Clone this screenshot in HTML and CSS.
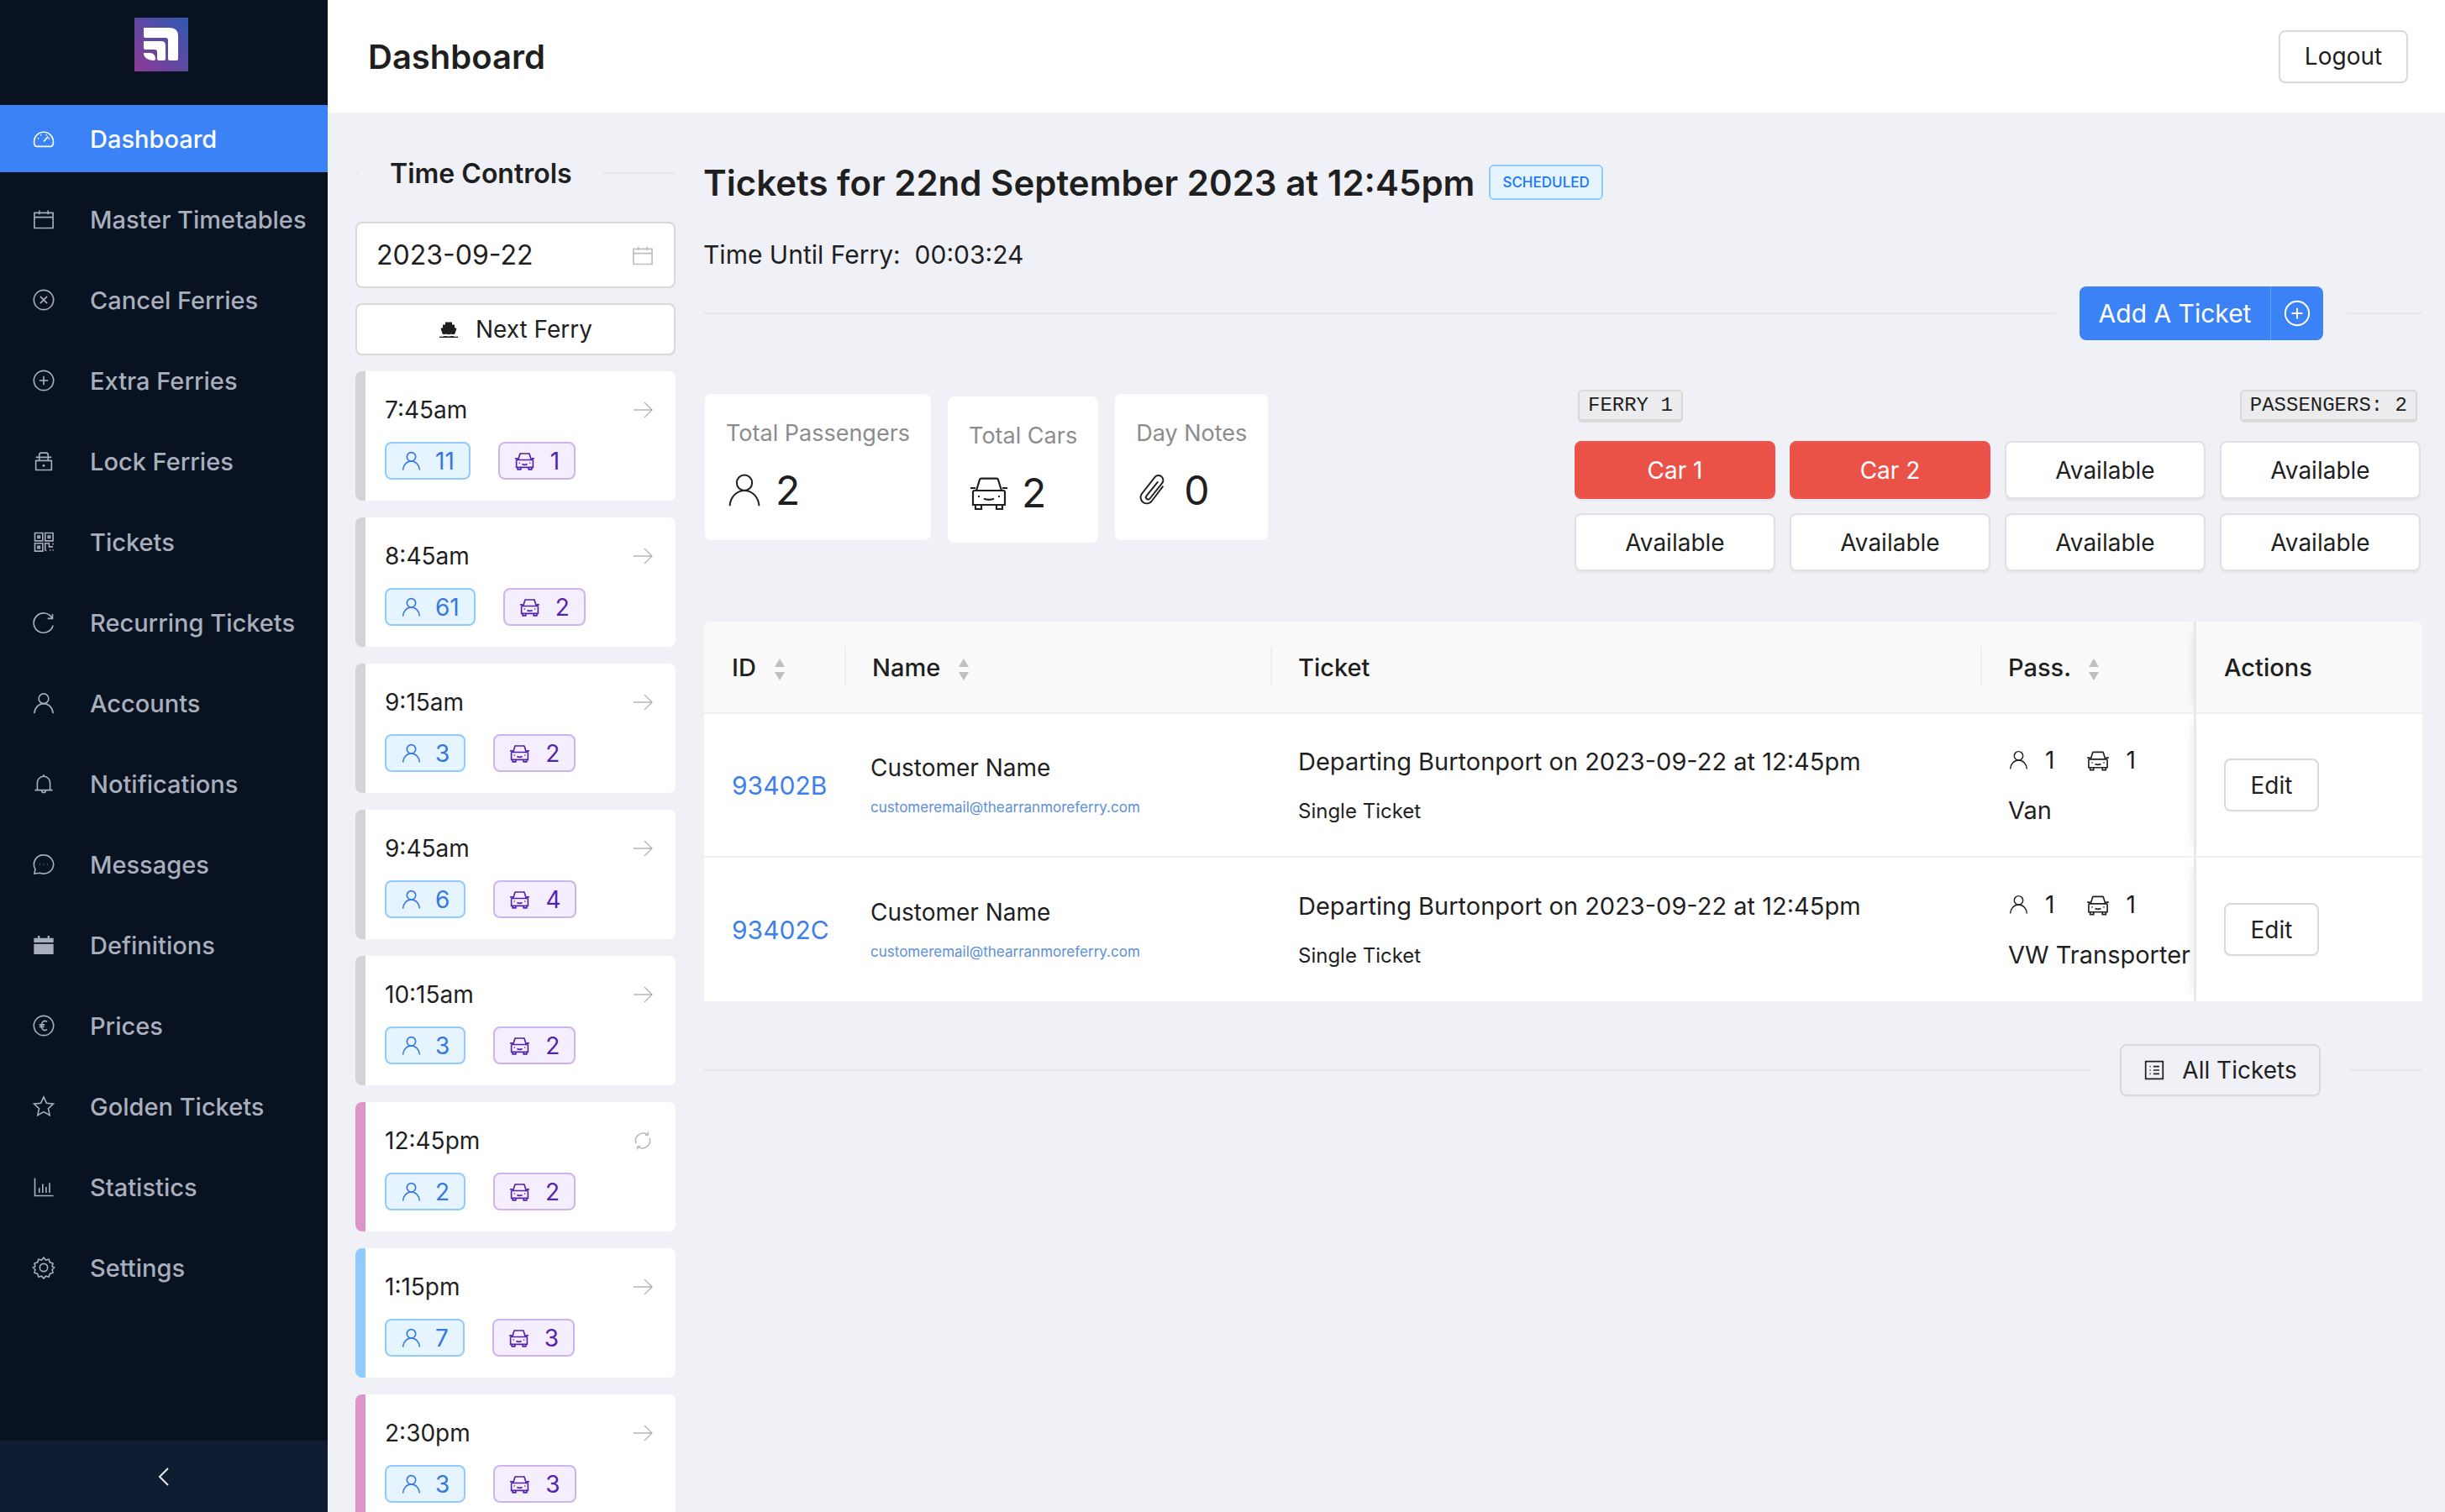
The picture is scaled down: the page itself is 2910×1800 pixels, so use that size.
FILE: index.html
```html
<!DOCTYPE html>
<html lang="en">
<head>
  <meta charset="UTF-8" />
  <title>Dashboard</title>
  <link rel="stylesheet" href="styles.css">
</head>
<body>
  <svg class="sprites" aria-hidden="true">
    <symbol id="i-gauge" viewBox="0 0 24 24"><path d="M5 20h14c1.700 0 2.800-2 2.800-4.800A9.800 9.800 0 0 0 2.200 15.200C2.200 18 3.300 20 5 20z"/><path d="M12 15l4.500-5M6 11.500l1 .7M9 7.800l.4 1M15 7.800l-.4 1M18 11.500l-1 .7"/></symbol>
    <symbol id="i-calendar" viewBox="0 0 24 24"><path d="M2.500 5.500h19v15.500h-19zM2.500 10h19M7.500 3v4M16.500 3v4"/></symbol>
    <symbol id="i-x-circle" viewBox="0 0 24 24"><circle cx="12" cy="12" r="10"/><path d="M8.500 8.500l7 7M15.500 8.500l-7 7"/></symbol>
    <symbol id="i-plus-circle" viewBox="0 0 24 24"><circle cx="12" cy="12" r="10"/><path d="M12 7.500v9M7.500 12h9"/></symbol>
    <symbol id="i-lock" viewBox="0 0 24 24"><path d="M4 11.500h16v9.500H4zM7.500 11.500V5.500a2 2 0 0 1 2-2h5a2 2 0 0 1 2 2v6M4 8h16"/><circle cx="12" cy="16.500" r=".6"/></symbol>
    <symbol id="i-qr" viewBox="0 0 24 24"><path d="M3 3h8v8H3zM13.500 3h8v8h-8zM3 13.500h8v8H3zM6 6h2v2H6zM16.500 6h2v2h-2zM6 16.500h2v2H6zM13.500 21v-7.500h4v3.500h4M21.500 13.500v1.500M14 21h1M18 20.500h1M21 20.500h1"/></symbol>
    <symbol id="i-refresh" viewBox="0 0 24 24"><path d="M20.500 7.500A10 10 0 1 0 21.500 15M21 3.500v4.500h-5"/></symbol>
    <symbol id="i-user" viewBox="0 0 24 24"><circle cx="12" cy="7.500" r="5"/><path d="M2.500 22.500c.3-5.700 4.500-10 9.500-10s9.200 4.300 9.500 10"/></symbol>
    <symbol id="i-bell" viewBox="0 0 24 24"><path d="M5.500 18.500V11a6.500 6.500 0 0 1 13 0v7.500M3 18.500h18M12 2.500v2M10 19a2 2 0 0 0 4 0"/></symbol>
    <symbol id="i-chat" viewBox="0 0 24 24"><path d="M12 2.500a10 9.500 0 1 1-3.800 18.300L2.500 21.500l.9-4.700A9.500 9.500 0 0 1 12 2.500z"/><path d="M8 12h.5M11.800 12h.5M15.500 12h.5"/></symbol>
    <symbol id="i-euro" viewBox="0 0 24 24"><circle cx="12" cy="12" r="10"/><path d="M15.500 8c-3-1.800-5.800-.2-5.800 4s2.800 5.800 5.800 4M7.500 11h5.500M7.500 13.200h5"/></symbol>
    <symbol id="i-star" viewBox="0 0 24 24"><path d="M12 2.500l2.900 6.300 6.900.8-5.100 4.700 1.400 6.800-6.100-3.400-6.100 3.400 1.400-6.800-5.100-4.700 6.900-.8z"/></symbol>
    <symbol id="i-bars" viewBox="0 0 24 24"><path d="M3 3v18h19M7.500 18v-5M11 18V9M14.500 18v-6M18 18V8"/></symbol>
    <symbol id="i-gear" viewBox="0 0 24 24"><path d="M12 1.800l2.100 2.500 3.200-.7 1 3.100 3.100 1-.7 3.200 2 1.100-2 2.100.7 3.200-3.100 1-1 3.100-3.200-.7-2.100 2.500-2.100-2.500-3.200.7-1-3.100-3.100-1 .7-3.200-2-2.100 2-1.100-.7-3.200 3.100-1 1-3.100 3.200.7z"/><circle cx="12" cy="12" r="4"/></symbol>
    <symbol id="i-car" viewBox="0 0 24 24"><path d="M3.500 11h17a1 1 0 0 1 1 1v7.500h-19V12a1 1 0 0 1 1-1zM4.500 11l2-6.500a1 1 0 0 1 1-.7h9a1 1 0 0 1 1 .7l2 6.500M1 9.500h3M20 9.500h3M4 19.500v2.500h3.500v-2.500M16.500 19.500v2.500H20v-2.500M9 15.800c1.500 .8 4.500 .8 6 0M5.500 14.500h1M17.500 14.500h1"/></symbol>
    <symbol id="i-arrow" viewBox="0 0 24 24"><path d="M1 12h22M14 3l9 9-9 9"/></symbol>
    <symbol id="i-sync" viewBox="0 0 24 24"><path d="M4 15A9 9 0 0 1 18 5M20 9a9 9 0 0 1-14 10M15 5.500l3.500-.5-.3-3.500M9 18.500l-3.500.5.3 3.500"/></symbol>
    <symbol id="i-clip" viewBox="0 0 24 24"><path d="M18.500 9.500l-8 10.500a4.200 4.200 0 0 1-6.700-5L12.800 3.500a3.200 3.200 0 0 1 5 4L9.500 18a1.500 1.500 0 0 1-2.400-1.800L15 6.500"/></symbol>
    <symbol id="i-list" viewBox="0 0 24 24"><path d="M2.500 2.500h19v19h-19zM11 8h6.500M11 12h6.500M11 16h6.500M7 8h1M7 12h1M7 16h1"/></symbol>
    <symbol id="i-sort" viewBox="0 0 12 26"><path d="M6 0l6 10H0zM6 26L0 16h12z"/></symbol>
    <symbol id="i-calendar-fill" viewBox="0 0 24 24"><path d="M6 2.500h2v2.500h8V2.500h2V5h4v4.500H2V5h4zM2 11h20v10.500H2z"/></symbol>
    <symbol id="i-ship" viewBox="0 0 24 24"><path d="M8 3.500h8v3h3v3.500l2.500 1-2.200 6.500c-2 1-3.300.5-4.300 0-1.800 1-4.200 1-6 0-1 .5-2.300 1-4.300 0L2.500 11 5 10V6.500h3zM1 20.500c4 1 5-1 7-.5s6 .5 8 0 3 1.500 7 .5v1.500H1z"/></symbol>
  </svg>

  <aside class="sidebar">
    <div class="logo-area">
      <svg class="logo" viewBox="0 0 64 64">
        <defs>
          <linearGradient id="logo-grad" x1="0" y1="1" x2="1" y2="0">
            <stop offset="0" stop-color="#8e3a94"/>
            <stop offset="1" stop-color="#2e58b0"/>
          </linearGradient>
        </defs>
        <rect width="64" height="64" fill="url(#logo-grad)"/>
        <path fill="#fff" d="M11 12H42Q52 12 52 22V49Q52 51 50 51H42Q40 51 40 49V27Q40 24 37 24H13Q11 24 11 22Z"/>
        <path fill="#fff" d="M11 28H32Q37 28 37 33V49Q37 51 35 51H29Q27 51 27 49V41Q27 38 24 38H13Q11 38 11 36Z"/>
        <path fill="#fff" d="M11 42H19Q25 43 25 49Q25 51 22 51Q13 50 11 44Z"/>
      </svg>
    </div>
    <nav class="nav">
      <a class="nav-item active"><svg class="icon"><use href="#i-gauge"/></svg>Dashboard</a>
      <a class="nav-item"><svg class="icon"><use href="#i-calendar"/></svg>Master Timetables</a>
      <a class="nav-item"><svg class="icon"><use href="#i-x-circle"/></svg>Cancel Ferries</a>
      <a class="nav-item"><svg class="icon"><use href="#i-plus-circle"/></svg>Extra Ferries</a>
      <a class="nav-item"><svg class="icon"><use href="#i-lock"/></svg>Lock Ferries</a>
      <a class="nav-item"><svg class="icon"><use href="#i-qr"/></svg>Tickets</a>
      <a class="nav-item"><svg class="icon"><use href="#i-refresh"/></svg>Recurring Tickets</a>
      <a class="nav-item"><svg class="icon"><use href="#i-user"/></svg>Accounts</a>
      <a class="nav-item"><svg class="icon"><use href="#i-bell"/></svg>Notifications</a>
      <a class="nav-item"><svg class="icon"><use href="#i-chat"/></svg>Messages</a>
      <a class="nav-item"><svg class="icon solid"><use href="#i-calendar-fill"/></svg>Definitions</a>
      <a class="nav-item"><svg class="icon"><use href="#i-euro"/></svg>Prices</a>
      <a class="nav-item"><svg class="icon"><use href="#i-star"/></svg>Golden Tickets</a>
      <a class="nav-item"><svg class="icon"><use href="#i-bars"/></svg>Statistics</a>
      <a class="nav-item"><svg class="icon"><use href="#i-gear"/></svg>Settings</a>
    </nav>
    <div class="collapse">
      <svg class="collapse-icon" viewBox="0 0 16 24"><path d="M13 2L3 12l10 10"/></svg>
    </div>
  </aside>

  <div class="main">
    <header class="topbar">
      <h1>Dashboard</h1>
      <button class="btn logout">Logout</button>
    </header>

    <div class="content">
      <section class="times">
        <div class="times-title">
          <span class="rule short"></span>
          <h2>Time Controls</h2>
          <span class="rule"></span>
        </div>
        <div class="date-input">
          <span>2023-09-22</span>
          <svg class="icon"><use href="#i-calendar"/></svg>
        </div>
        <button class="btn next-ferry"><svg class="icon solid"><use href="#i-ship"/></svg>Next Ferry</button>

        <div class="ferry-card grey">
          <div class="ferry-top"><span>7:45am</span><svg class="icon"><use href="#i-arrow"/></svg></div>
          <div class="ferry-tags">
            <span class="tag pax"><svg class="icon"><use href="#i-user"/></svg>11</span>
            <span class="tag car"><svg class="icon"><use href="#i-car"/></svg>1</span>
          </div>
        </div>
        <div class="ferry-card grey">
          <div class="ferry-top"><span>8:45am</span><svg class="icon"><use href="#i-arrow"/></svg></div>
          <div class="ferry-tags">
            <span class="tag pax"><svg class="icon"><use href="#i-user"/></svg>61</span>
            <span class="tag car"><svg class="icon"><use href="#i-car"/></svg>2</span>
          </div>
        </div>
        <div class="ferry-card grey">
          <div class="ferry-top"><span>9:15am</span><svg class="icon"><use href="#i-arrow"/></svg></div>
          <div class="ferry-tags">
            <span class="tag pax"><svg class="icon"><use href="#i-user"/></svg>3</span>
            <span class="tag car"><svg class="icon"><use href="#i-car"/></svg>2</span>
          </div>
        </div>
        <div class="ferry-card grey">
          <div class="ferry-top"><span>9:45am</span><svg class="icon"><use href="#i-arrow"/></svg></div>
          <div class="ferry-tags">
            <span class="tag pax"><svg class="icon"><use href="#i-user"/></svg>6</span>
            <span class="tag car"><svg class="icon"><use href="#i-car"/></svg>4</span>
          </div>
        </div>
        <div class="ferry-card grey">
          <div class="ferry-top"><span>10:15am</span><svg class="icon"><use href="#i-arrow"/></svg></div>
          <div class="ferry-tags">
            <span class="tag pax"><svg class="icon"><use href="#i-user"/></svg>3</span>
            <span class="tag car"><svg class="icon"><use href="#i-car"/></svg>2</span>
          </div>
        </div>
        <div class="ferry-card pink">
          <div class="ferry-top"><span>12:45pm</span><svg class="icon"><use href="#i-sync"/></svg></div>
          <div class="ferry-tags">
            <span class="tag pax"><svg class="icon"><use href="#i-user"/></svg>2</span>
            <span class="tag car"><svg class="icon"><use href="#i-car"/></svg>2</span>
          </div>
        </div>
        <div class="ferry-card blue">
          <div class="ferry-top"><span>1:15pm</span><svg class="icon"><use href="#i-arrow"/></svg></div>
          <div class="ferry-tags">
            <span class="tag pax"><svg class="icon"><use href="#i-user"/></svg>7</span>
            <span class="tag car"><svg class="icon"><use href="#i-car"/></svg>3</span>
          </div>
        </div>
        <div class="ferry-card pink">
          <div class="ferry-top"><span>2:30pm</span><svg class="icon"><use href="#i-arrow"/></svg></div>
          <div class="ferry-tags">
            <span class="tag pax"><svg class="icon"><use href="#i-user"/></svg>3</span>
            <span class="tag car"><svg class="icon"><use href="#i-car"/></svg>3</span>
          </div>
        </div>
      </section>

      <section class="tickets">
        <div class="tickets-title">
          <h2>Tickets for 22nd September 2023 at 12:45pm</h2>
          <span class="status">SCHEDULED</span>
        </div>
        <div class="countdown">Time Until Ferry:&nbsp; 00:03:24</div>

        <div class="rule-row add-row">
          <span class="rule"></span>
          <div class="add-btn">
            <span class="add-label">Add A Ticket</span>
            <span class="add-plus"><svg class="icon"><use href="#i-plus-circle"/></svg></span>
          </div>
          <span class="rule end"></span>
        </div>

        <div class="summary">
          <div class="stats">
            <div class="stat">
              <div class="stat-label">Total Passengers</div>
              <div class="stat-value"><svg class="icon stat-user"><use href="#i-user"/></svg>2</div>
            </div>
            <div class="stat offset">
              <div class="stat-label">Total Cars</div>
              <div class="stat-value"><svg class="icon stat-car"><use href="#i-car"/></svg>2</div>
            </div>
            <div class="stat">
              <div class="stat-label">Day Notes</div>
              <div class="stat-value"><svg class="icon stat-clip"><use href="#i-clip"/></svg>0</div>
            </div>
          </div>

          <div class="deck">
            <div class="deck-head">
              <span class="kbd">FERRY 1</span>
              <span class="kbd">PASSENGERS: 2</span>
            </div>
            <div class="deck-grid">
              <button class="seat taken">Car 1</button>
              <button class="seat taken">Car 2</button>
              <button class="seat">Available</button>
              <button class="seat">Available</button>
              <button class="seat">Available</button>
              <button class="seat">Available</button>
              <button class="seat">Available</button>
              <button class="seat">Available</button>
            </div>
          </div>
        </div>

        <table class="ticket-table">
          <colgroup>
            <col class="col-id"><col class="col-name"><col class="col-ticket"><col class="col-pass"><col class="col-actions">
          </colgroup>
          <thead>
            <tr>
              <th>ID <svg class="sort"><use href="#i-sort"/></svg></th>
              <th class="sep">Name <svg class="sort"><use href="#i-sort"/></svg></th>
              <th class="sep">Ticket</th>
              <th class="sep">Pass. <svg class="sort"><use href="#i-sort"/></svg></th>
              <th class="actions">Actions</th>
            </tr>
          </thead>
          <tbody>
            <tr>
              <td><a class="ticket-id">93402B</a></td>
              <td>
                <div class="customer">Customer Name</div>
                <a class="email">customeremail@thearranmoreferry.com</a>
              </td>
              <td>
                <div class="departing">Departing Burtonport on 2023-09-22 at 12:45pm</div>
                <div class="ticket-type">Single Ticket</div>
              </td>
              <td>
                <div class="counts">
                  <svg class="icon"><use href="#i-user"/></svg><span>1</span>
                  <svg class="icon car-small"><use href="#i-car"/></svg><span>1</span>
                </div>
                <div class="vehicle">Van</div>
              </td>
              <td class="actions"><button class="btn edit">Edit</button></td>
            </tr>
            <tr>
              <td><a class="ticket-id">93402C</a></td>
              <td>
                <div class="customer">Customer Name</div>
                <a class="email">customeremail@thearranmoreferry.com</a>
              </td>
              <td>
                <div class="departing">Departing Burtonport on 2023-09-22 at 12:45pm</div>
                <div class="ticket-type">Single Ticket</div>
              </td>
              <td>
                <div class="counts">
                  <svg class="icon"><use href="#i-user"/></svg><span>1</span>
                  <svg class="icon car-small"><use href="#i-car"/></svg><span>1</span>
                </div>
                <div class="vehicle">VW Transporter</div>
              </td>
              <td class="actions"><button class="btn edit">Edit</button></td>
            </tr>
          </tbody>
        </table>

        <div class="rule-row all-row">
          <span class="rule"></span>
          <button class="btn all-tickets"><svg class="icon"><use href="#i-list"/></svg>All Tickets</button>
          <span class="rule end"></span>
        </div>
      </section>
    </div>
  </div>
</body>
</html>
```

FILE: styles.css
```css
* {
  box-sizing: border-box;
}
body {
  display: flex;
  height: 100vh;
  margin: 0;
  overflow: hidden;
  background: #f0f1f7;
  color: #1f1f1f;
  font-family: Inter, "Liberation Sans", sans-serif;
  font-size: 30px;
}
h1, h2 {
  margin: 0;
  font-weight: 600;
}
.sprites {
  display: none;
}
.icon {
  flex: none;
  width: 28px;
  height: 28px;
  fill: none;
  stroke: currentColor;
  stroke-width: 1.4;
}
.icon.solid {
  fill: currentColor;
  stroke: none;
}

/* sidebar */
.sidebar {
  display: flex;
  flex: none;
  flex-direction: column;
  width: 390px;
  background: #081220;
}
.logo-area {
  display: flex;
  justify-content: center;
  height: 125px;
  padding: 21px 7px 0 0;
}
.logo {
  width: 64px;
  height: 64px;
}
.nav {
  display: flex;
  flex: 1;
  flex-direction: column;
  gap: 16px;
}
.nav-item {
  display: flex;
  align-items: center;
  gap: 41px;
  height: 80px;
  padding-left: 38px;
  color: #a8afbc;
  font-size: 29px;
  font-weight: 500;
}
.nav-item.active {
  background: #3b82f6;
  color: #fff;
}
.collapse {
  display: flex;
  align-items: center;
  justify-content: center;
  height: 85px;
  background: #0f1d33;
}
.collapse-icon {
  width: 16px;
  height: 24px;
  fill: none;
  stroke: #e5e7eb;
  stroke-width: 2;
}

/* top bar */
.main {
  display: flex;
  flex: 1;
  flex-direction: column;
  min-width: 0;
}
.topbar {
  display: flex;
  flex: none;
  align-items: center;
  justify-content: space-between;
  height: 134px;
  padding: 0 44px 0 48px;
  background: #fff;
}
.topbar h1 {
  font-size: 40px;
}
.btn {
  border: 2px solid #d9d9d9;
  border-radius: 8px;
  background: #fff;
  color: #1f1f1f;
  font-family: inherit;
  font-size: 28px;
  box-shadow: 0 2px 0 rgba(0,0,0,0.02);
}
.logout {
  width: 154px;
  height: 63px;
}

.content {
  display: flex;
  flex: 1;
  gap: 33px;
  min-height: 0;
  padding: 52px 27px 0 33px;
  overflow: hidden;
}
.rule {
  flex: 1;
  height: 2px;
  background: #e6e6ec;
}

/* time column */
.times {
  flex: none;
  width: 381px;
}
.times-title {
  display: flex;
  align-items: center;
  height: 40px;
  margin-bottom: 38px;
}
.times-title h2 {
  padding: 0 36px 0 37px;
  font-size: 32px;
}
.rule.short {
  flex: none;
  width: 4px;
}
.date-input {
  display: flex;
  align-items: center;
  justify-content: space-between;
  height: 79px;
  margin-bottom: 18px;
  padding: 0 23px;
  border: 2px solid #d9d9d9;
  border-radius: 8px;
  background: #fff;
  font-size: 32px;
}
.date-input .icon {
  color: #bdbdbd;
}
.next-ferry {
  display: flex;
  align-items: center;
  justify-content: center;
  gap: 20px;
  width: 100%;
  height: 62px;
  margin-bottom: 19px;
}
.next-ferry .icon {
  width: 24px;
  height: 24px;
}
.ferry-card {
  height: 154px;
  margin-bottom: 20px;
  padding: 28px 27px 0 23px;
  border-left: 12px solid #d4d4d6;
  border-radius: 8px;
  background: #fff;
}
.ferry-card.pink {
  border-left-color: #dd94c9;
}
.ferry-card.blue {
  border-left-color: #91caff;
}
.ferry-top {
  display: flex;
  align-items: center;
  justify-content: space-between;
  height: 36px;
  margin-bottom: 20px;
  font-size: 28px;
}
.ferry-top .icon {
  width: 24px;
  height: 24px;
  color: #b5b5b5;
}
.ferry-tags {
  display: flex;
  gap: 33px;
}
.tag {
  display: flex;
  align-items: center;
  height: 45px;
  padding: 0 17px;
  border: 2px solid;
  border-radius: 8px;
  font-size: 28px;
}
.tag.pax {
  gap: 16px;
  border-color: #91caff;
  background: #e6f4ff;
  color: #3478e0;
}
.tag.car {
  gap: 18px;
  border-color: #cdb4ef;
  background: #f5eefe;
  color: #5223ad;
}
.tag .icon {
  width: 25px;
  height: 25px;
  stroke-width: 1.6;
}

/* tickets column */
.tickets {
  flex: 1;
  min-width: 0;
}
.tickets-title {
  display: flex;
  align-items: center;
  gap: 17px;
  height: 62px;
}
.tickets-title h2 {
  font-size: 42px;
}
.status {
  padding: 9px 14px;
  border: 2px solid #91caff;
  border-radius: 6px;
  background: #e6f4ff;
  color: #1677ff;
  font-size: 17px;
  font-weight: 500;
}
.countdown {
  display: flex;
  align-items: center;
  height: 40px;
  margin-top: 35px;
}
.rule-row {
  display: flex;
  align-items: center;
}
.add-row {
  gap: 28px;
  height: 64px;
  margin-top: 18px;
}
.rule.end {
  flex: none;
  width: 90px;
}
.add-btn {
  display: flex;
  width: 290px;
  height: 64px;
  border-radius: 8px;
  background: #3b82f6;
  color: #fff;
}
.add-label {
  display: flex;
  flex: 1;
  align-items: center;
  justify-content: center;
}
.add-plus {
  display: flex;
  flex: none;
  align-items: center;
  justify-content: center;
  width: 63px;
  border-left: 1px solid #6ba2f8;
}
.add-plus .icon {
  width: 34px;
  height: 34px;
}

.summary {
  display: flex;
  justify-content: space-between;
  height: 216px;
  margin-top: 59px;
}
.stats {
  display: flex;
  align-items: flex-start;
  gap: 20px;
  padding: 5px 0 0 2px;
}
.stat {
  height: 174px;
  padding: 29px 25px 0;
  border-radius: 8px;
  background: #fff;
}
.stat.offset {
  margin-top: 3px;
}
.stat-label {
  color: #8c8c8c;
  font-size: 27px;
  line-height: 36px;
}
.stat-value {
  display: flex;
  align-items: center;
  gap: 15px;
  height: 44px;
  margin-top: 27px;
  font-size: 48px;
}
.stat-value .icon {
  stroke-width: 1.1;
}
.stat-user {
  width: 44px;
  height: 44px;
}
.stat-car {
  width: 48px;
  height: 48px;
}
.stat-clip {
  width: 42px;
  height: 44px;
}
.deck {
  width: 1007px;
  margin-right: 2px;
}
.deck-head {
  display: flex;
  justify-content: space-between;
  height: 39px;
  margin-bottom: 22px;
  padding: 0 4px;
}
.kbd {
  display: flex;
  align-items: center;
  padding: 0 10px;
  border: 2px solid #d9d9d9;
  border-bottom-width: 4px;
  border-radius: 5px;
  background: #ececee;
  font-family: "Liberation Mono", monospace;
  font-size: 24px;
}
.deck-grid {
  display: grid;
  grid-template-columns: repeat(4, 1fr);
  grid-auto-rows: 69px;
  gap: 17px;
}
.seat {
  border: 2px solid #e0e0e4;
  border-radius: 8px;
  background: #fff;
  color: #1f1f1f;
  font-family: inherit;
  font-size: 28px;
  box-shadow: 0 3px 0 rgba(0,0,0,0.03);
}
.seat.taken {
  border-color: #ef5350;
  background: #ea5248;
  color: #fff;
}

/* table */
.ticket-table {
  width: 2045px;
  margin: 60px 0 0 1px;
  border-collapse: separate;
  border-spacing: 0;
  table-layout: fixed;
}
.col-id {
  width: 167px;
}
.col-name {
  width: 507px;
}
.col-ticket {
  width: 845px;
}
.col-pass {
  width: 254px;
}
.col-actions {
  width: 272px;
}
.ticket-table th {
  position: relative;
  height: 110px;
  padding: 0 0 0 33px;
  border-bottom: 2px solid #f0f0f0;
  background: #fafafa;
  font-size: 29px;
  font-weight: 500;
  text-align: left;
}
.ticket-table th:first-child {
  border-radius: 8px 0 0 0;
}
.ticket-table th:last-child {
  border-radius: 0 8px 0 0;
}
.ticket-table th.sep::before {
  position: absolute;
  top: 30px;
  left: 0;
  width: 2px;
  height: 46px;
  background: #f0f0f0;
  content: "";
}
.sort {
  width: 12px;
  height: 26px;
  margin-left: 14px;
  vertical-align: -5px;
  fill: #bfbfbf;
}
.ticket-table td {
  height: 171px;
  padding: 0 0 0 33px;
  border-bottom: 2px solid #f0f0f0;
  background: #fff;
  vertical-align: middle;
}
.ticket-table tr:last-child td {
  border-bottom: none;
}
.ticket-table .actions {
  border-left: 3px solid #e8e8e8;
  box-shadow: -12px 0 12px -10px rgba(0,0,0,0.08);
}
.ticket-id {
  color: #3f7fe8;
}
.customer {
  margin-left: -2px;
  margin-bottom: 18px;
  font-size: 28px;
  line-height: 34px;
}
.email {
  display: block;
  margin-left: -2px;
  color: #5b8fe0;
  font-size: 17px;
  line-height: 24px;
}
.departing {
  margin-bottom: 28px;
  font-size: 29px;
  line-height: 34px;
}
.ticket-type {
  font-size: 24px;
  line-height: 28px;
}
.counts {
  display: flex;
  align-items: center;
  height: 34px;
  margin-bottom: 26px;
  font-size: 28px;
}
.counts .icon {
  width: 25px;
  height: 25px;
  margin-right: 19px;
}
.counts .car-small {
  width: 28px;
  height: 28px;
  margin-left: 38px;
}
.vehicle {
  font-size: 29px;
  line-height: 34px;
}
.edit {
  width: 113px;
  height: 63px;
}

.all-row {
  gap: 34px;
  height: 62px;
  margin-top: 51px;
}
.all-tickets {
  display: flex;
  align-items: center;
  justify-content: center;
  gap: 20px;
  width: 239px;
  height: 62px;
  background: transparent;
}
.all-tickets .icon {
  width: 26px;
  height: 26px;
  stroke-width: 1.6;
}
.all-row .rule.end {
  width: 87px;
}
```
